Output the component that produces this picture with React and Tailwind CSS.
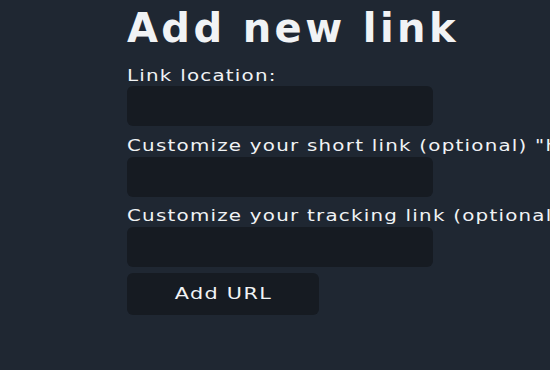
const labelText = "inline-block origin-left scale-x-[1.24] text-[16px] leading-[20px] whitespace-nowrap tracking-[1px]";

export default function App() {
  return (
    <div className="w-[550px] h-[370px] overflow-hidden bg-[#1f2732] text-[#f1f3f5] font-['DejaVu_Sans',sans-serif]">
      <div className="pl-[127px] pt-[4px] flex flex-col items-start">
        <h1 className="text-[40px] leading-[48px] font-semibold tracking-[3.4px] whitespace-nowrap">Add new link</h1>
        <label className="mt-[14px] flex">
          <span className={labelText}>Link location:</span>
        </label>
        <input className="w-[306px] h-[40px] rounded-md bg-[#161b22] outline-none" />
        <label className="mt-[10px] flex">
          <span className={labelText}>Customize your short link (optional) "https://</span>
        </label>
        <input className="mt-[1px] w-[306px] h-[40px] rounded-md bg-[#161b22] outline-none" />
        <label className="mt-[9px] flex">
          <span className={labelText}>Customize your tracking link (optional)</span>
        </label>
        <input className="mt-[1px] w-[306px] h-[40px] rounded-md bg-[#161b22] outline-none" />
        <button className="mt-[6px] w-[192px] h-[42px] rounded-md bg-[#161b22] flex items-center justify-center">
          <span className="inline-block scale-x-[1.3] text-[16px] tracking-[1px]">Add URL</span>
        </button>
      </div>
    </div>
  );
}
